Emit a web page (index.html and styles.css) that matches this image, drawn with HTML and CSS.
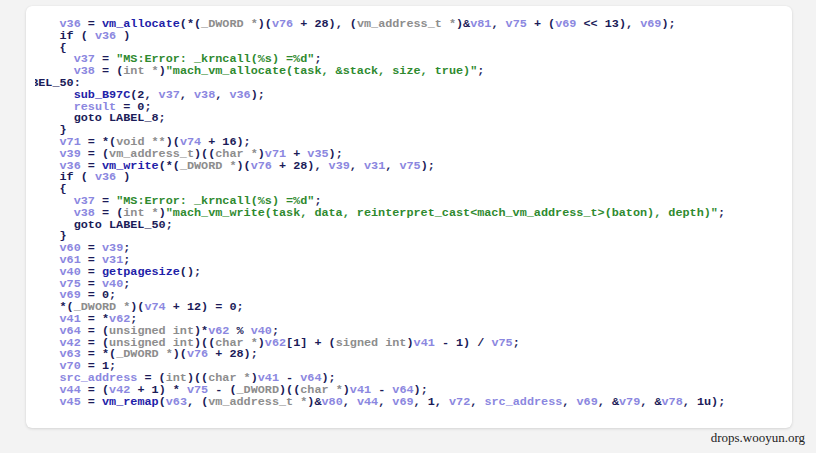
FILE: index.html
```html
<!DOCTYPE html>
<html>
<head>
<meta charset="utf-8">
<link rel="stylesheet" href="styles.css">
</head>
<body>
<div class="page">
  <div class="card">
    <div class="viewport">
<pre class="code"><span class="ln">      <span class="v">v36</span> = <span class="f">vm_allocate</span>(*(<span class="t">_DWORD *</span>)(<span class="v">v76</span> + 28), (<span class="t">vm_address_t *</span>)&amp;<span class="v">v81</span>, <span class="v">v75</span> + (<span class="v">v69</span> &lt;&lt; 13), <span class="v">v69</span>);</span>
<span class="ln">      if ( <span class="v">v36</span> )</span>
<span class="ln">      {</span>
<span class="ln">        <span class="v">v37</span> = <span class="s">"MS:Error: _krncall(%s) =%d"</span>;</span>
<span class="ln">        <span class="v">v38</span> = (<span class="t">int *</span>)<span class="s">"mach_vm_allocate(task, &amp;stack, size, true)"</span>;</span>
<span class="ln">LABEL_50:</span>
<span class="ln">        <span class="f">sub_B97C</span>(2, <span class="v">v37</span>, <span class="v">v38</span>, <span class="v">v36</span>);</span>
<span class="ln">        <span class="v">result</span> = 0;</span>
<span class="ln">        goto LABEL_8;</span>
<span class="ln">      }</span>
<span class="ln">      <span class="v">v71</span> = *(<span class="t">void **</span>)(<span class="v">v74</span> + 16);</span>
<span class="ln">      <span class="v">v39</span> = (<span class="t">vm_address_t</span>)((<span class="t">char *</span>)<span class="v">v71</span> + <span class="v">v35</span>);</span>
<span class="ln">      <span class="v">v36</span> = <span class="f">vm_write</span>(*(<span class="t">_DWORD *</span>)(<span class="v">v76</span> + 28), <span class="v">v39</span>, <span class="v">v31</span>, <span class="v">v75</span>);</span>
<span class="ln">      if ( <span class="v">v36</span> )</span>
<span class="ln">      {</span>
<span class="ln">        <span class="v">v37</span> = <span class="s">"MS:Error: _krncall(%s) =%d"</span>;</span>
<span class="ln">        <span class="v">v38</span> = (<span class="t">int *</span>)<span class="s">"mach_vm_write(task, data, reinterpret_cast&lt;mach_vm_address_t&gt;(baton), depth)"</span>;</span>
<span class="ln">        goto LABEL_50;</span>
<span class="ln">      }</span>
<span class="ln">      <span class="v">v60</span> = <span class="v">v39</span>;</span>
<span class="ln">      <span class="v">v61</span> = <span class="v">v31</span>;</span>
<span class="ln">      <span class="v">v40</span> = <span class="f">getpagesize</span>();</span>
<span class="ln">      <span class="v">v75</span> = <span class="v">v40</span>;</span>
<span class="ln">      <span class="v">v69</span> = 0;</span>
<span class="ln">      *(<span class="t">_DWORD *</span>)(<span class="v">v74</span> + 12) = 0;</span>
<span class="ln">      <span class="v">v41</span> = *<span class="v">v62</span>;</span>
<span class="ln">      <span class="v">v64</span> = (<span class="t">unsigned int</span>)*<span class="v">v62</span> % <span class="v">v40</span>;</span>
<span class="ln">      <span class="v">v42</span> = (<span class="t">unsigned int</span>)((<span class="t">char *</span>)<span class="v">v62</span>[1] + (<span class="t">signed int</span>)<span class="v">v41</span> - 1) / <span class="v">v75</span>;</span>
<span class="ln">      <span class="v">v63</span> = *(<span class="t">_DWORD *</span>)(<span class="v">v76</span> + 28);</span>
<span class="ln">      <span class="v">v70</span> = 1;</span>
<span class="ln">      <span class="v">src_address</span> = (<span class="t">int</span>)((<span class="t">char *</span>)<span class="v">v41</span> - <span class="v">v64</span>);</span>
<span class="ln">      <span class="v">v44</span> = (<span class="v">v42</span> + 1) * <span class="v">v75</span> - (<span class="t">_DWORD</span>)((<span class="t">char *</span>)<span class="v">v41</span> - <span class="v">v64</span>);</span>
<span class="ln">      <span class="v">v45</span> = <span class="f">vm_remap</span>(<span class="v">v63</span>, (<span class="t">vm_address_t *</span>)&amp;<span class="v">v80</span>, <span class="v">v44</span>, <span class="v">v69</span>, 1, <span class="v">v72</span>, <span class="v">src_address</span>, <span class="v">v69</span>, &amp;<span class="v">v79</span>, &amp;<span class="v">v78</span>, 1u);</span></pre>
    </div>
  </div>
  <div class="footer">drops.wooyun.org</div>
</div>
</body>
</html>
```

FILE: styles.css
```css
html, body {
  margin: 0;
  padding: 0;
}
body {
  background: #f3f3f3;
  width: 816px;
  height: 453px;
  overflow: hidden;
}
.page {
  padding-top: 6px;
}
.card {
  margin: 0 24px 0 26px;
  background: #ffffff;
  border-radius: 6px;
  box-shadow: 0 1px 3px rgba(0, 0, 0, 0.12), 0 0 1px rgba(0, 0, 0, 0.08);
  height: 422px;
  box-sizing: border-box;
  padding: 10px 0 0 9px;
}
.viewport {
  overflow: hidden;
  padding: 3px 0;
}
.code {
  margin: 0 0 0 -18px;
  font-family: "Liberation Mono", "DejaVu Sans Mono", monospace;
  font-weight: bold;
  font-size: 11.8px;
  line-height: 11.8px;
  color: #1b1b58;
  white-space: pre;
}
.v { color: #8b87e0; }
.f { color: #1e21a8; }
.t { color: #8d8d8d; }
.s { color: #2f8a2f; }
.footer {
  display: flex;
  justify-content: flex-end;
  padding: 2px 11px 0 0;
  font-family: "Liberation Serif", "Times New Roman", serif;
  font-size: 13px;
  line-height: 15px;
  color: #222222;
}
```
